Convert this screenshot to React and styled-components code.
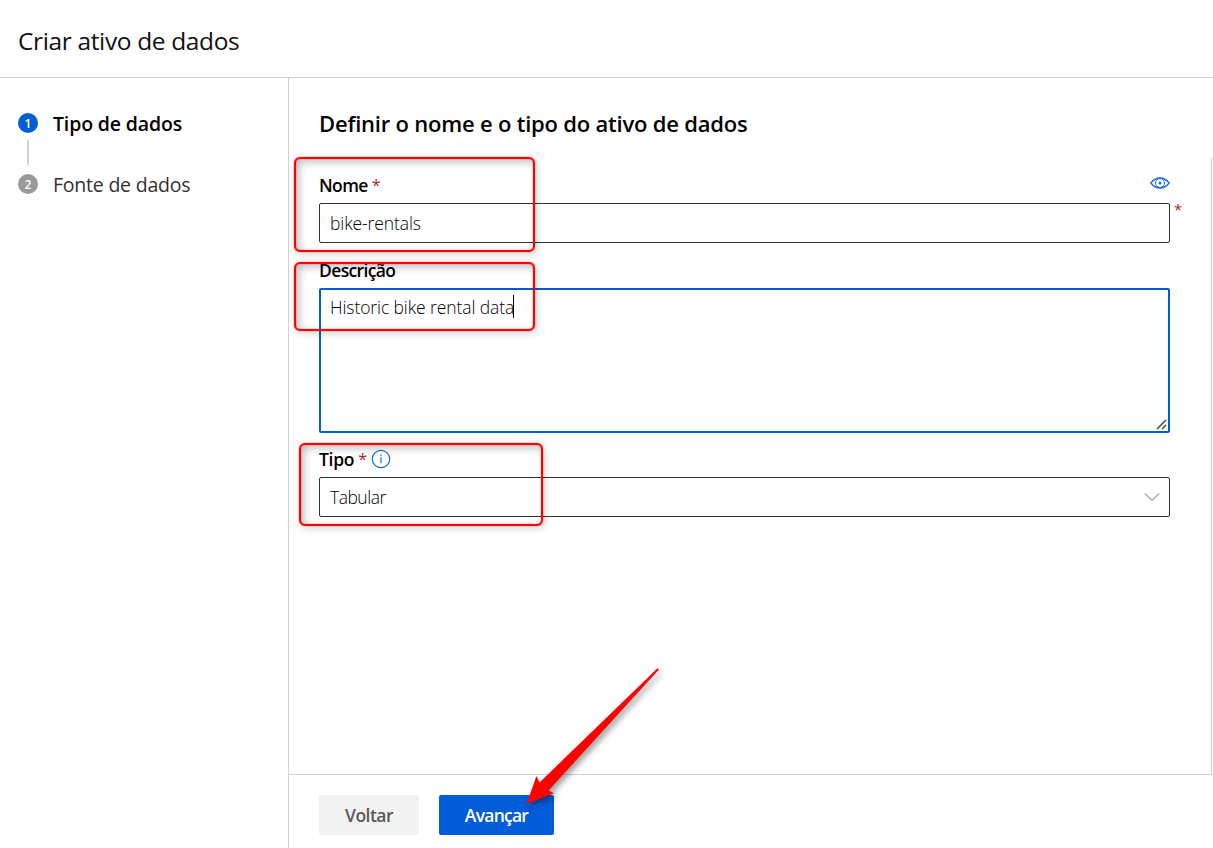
import React from "react";
import styled, { createGlobalStyle } from "styled-components";

const Global = createGlobalStyle`
  *, *::before, *::after { box-sizing: border-box; }
  body {
    margin: 0;
    background: #fff;
    color: #000;
    font-family: "Segoe UI", "Open Sans", "Noto Sans", sans-serif;
    overflow: hidden;
  }
`;

const Page = styled.div`
  position: relative;
  display: flex;
  flex-direction: column;
  width: 1213px;
  height: 848px;
  background: #fff;
`;

const Header = styled.header`
  flex: none;
  height: 78px;
  padding: 22px 18px 0;
  border-bottom: 1px solid #d2d2d2;
`;

const Label = styled.span`
  display: block;
  white-space: nowrap;
  font-size: ${(p) => p.$size}px;
  line-height: ${(p) => p.$line || 24}px;
  font-weight: ${(p) => p.$weight || 400};
  letter-spacing: ${(p) => p.$track || 0}px;
  color: ${(p) => p.$color || "#000"};
`;

const Body = styled.div`
  flex: 1;
  display: flex;
  min-height: 0;
`;

const Sidebar = styled.nav`
  flex: none;
  display: flex;
  flex-direction: column;
  width: 289px;
  padding: 32px 18px 0;
  border-right: 1px solid #d2d2d2;
`;

const Step = styled.div`
  display: flex;
  align-items: center;
  gap: 15px;
  height: 28px;
`;

const StepDot = styled.span`
  flex: none;
  width: 20px;
  height: 20px;
  margin-top: -2px;
  border-radius: 50%;
  background: ${(p) => (p.$active ? "#015cda" : "#999")};
  color: #fff;
  font-size: 12px;
  font-weight: 600;
  line-height: 21px;
  text-align: center;
`;

const StepLine = styled.div`
  width: 2px;
  height: 25px;
  margin: 2px 0 6px 9px;
  background: #d2d2d2;
`;

const Main = styled.main`
  flex: 1;
  display: flex;
  flex-direction: column;
  min-width: 0;
`;

const MainTitle = styled.div`
  flex: none;
  height: 80px;
  padding: 30px 30px 0;
`;

const Form = styled.div`
  flex: 1;
  display: flex;
  flex-direction: column;
  margin-right: 1px;
  padding: 12px 41px 0 30px;
  border-right: 1px solid #d0d0d0;
`;

const FieldHead = styled.div`
  display: flex;
  align-items: center;
  height: 29px;
  margin-bottom: 4px;
`;

const Required = styled.span`
  color: #a4262c;
  font-size: 16px;
  line-height: 24px;
  margin-left: 4px;
`;

const PreviewIcon = styled.svg`
  margin: -4px 0 0 auto;
`;

const InfoIcon = styled.svg`
  margin: 1px 0 0 4px;
`;

const InputRow = styled.div`
  position: relative;
  margin-bottom: 12px;
`;

const SideMark = styled.span`
  position: absolute;
  left: 855px;
  top: -3px;
  color: #a4262c;
  font-size: 14.5px;
  line-height: 20px;
`;

const Input = styled.div`
  display: flex;
  align-items: center;
  justify-content: space-between;
  width: 851px;
  height: 40px;
  padding: 0 9px 0 10px;
  border: 1px solid #323130;
  border-radius: 2px;
`;

const TextArea = styled.div`
  display: flex;
  position: relative;
  width: 851px;
  height: 145px;
  margin-bottom: 11px;
  padding: 5px 9px;
  border: 2px solid #015cda;
  border-radius: 2px;
`;

const Caret = styled.span`
  width: 1px;
  height: 23px;
  margin-left: -1px;
  background: #000;
`;

const Grip = styled.svg`
  position: absolute;
  right: 0;
  bottom: 0;
`;

const Footer = styled.footer`
  flex: none;
  display: flex;
  gap: 20px;
  height: 74px;
  padding: 20px 30px 0;
  border-top: 1px solid #d2d2d2;
`;

const Button = styled.button`
  display: flex;
  align-items: center;
  justify-content: center;
  width: ${(p) => (p.$primary ? 115 : 100)}px;
  height: 40px;
  padding: 0;
  border: 0;
  border-radius: 2px;
  background: ${(p) => (p.$primary ? "#015cda" : "#f3f2f2")};
  font-family: inherit;
`;

const Highlight = styled.div`
  position: absolute;
  left: ${(p) => p.$x}px;
  top: ${(p) => p.$y}px;
  width: ${(p) => p.$w}px;
  height: ${(p) => p.$h}px;
  border: 2px solid #fe0000;
  border-radius: 6px;
  box-shadow: 0 0 1px #fe0000, 2px 2px 8px rgba(0, 0, 0, 0.18),
    inset 0 0 1px #fe0000, inset 3px 3px 9px rgba(0, 0, 0, 0.26);
  pointer-events: none;
`;

const Arrow = styled.svg`
  position: absolute;
  left: 510px;
  top: 650px;
  filter: drop-shadow(3px 3px 3px rgba(0, 0, 0, 0.4));
`;

export default function App() {
  return (
    <Page>
      <Global />
      <Header>
        <Label $size={24.5} $line={38} $track={-0.36} $color="#111">Criar ativo de dados</Label>
      </Header>
      <Body>
        <Sidebar>
          <Step>
            <StepDot $active>1</StepDot>
            <Label $size={19.5} $weight={600} $track={-0.15}>Tipo de dados</Label>
          </Step>
          <StepLine />
          <Step>
            <StepDot>2</StepDot>
            <Label $size={19.5} $track={-0.22} $color="#323130">Fonte de dados</Label>
          </Step>
        </Sidebar>
        <Main>
          <MainTitle>
            <Label $size={22} $line={30} $weight={600} $track={-0.21}>Definir o nome e o tipo do ativo de dados</Label>
          </MainTitle>
          <Form>
            <FieldHead>
              <Label $size={17.5} $weight={600} $track={-0.6}>Nome</Label>
              <Required>*</Required>
              <PreviewIcon width="20" height="12" viewBox="0 0 20 12" fill="none" stroke="#1b6be0">
                <path d="M.8 6C3.4 2.7 6.500 1 10 1s6.600 1.700 9.200 5C16.600 9.300 13.500 11 10 11S3.400 9.300.8 6Z" strokeWidth="1.300" />
                <circle cx="10" cy="6" r="4.500" />
                <circle cx="10" cy="6" r="1.500" fill="#1b6be0" stroke="none" />
              </PreviewIcon>
            </FieldHead>
            <InputRow>
              <Input>
                <Label $size={17.5} $weight={300} $track={-0.1}>bike-rentals</Label>
              </Input>
              <SideMark>*</SideMark>
            </InputRow>
            <FieldHead>
              <Label $size={17.5} $weight={600} $track={-0.64}>Descrição</Label>
            </FieldHead>
            <TextArea>
              <Label $size={17.5} $weight={300} $track={-0.1}>Historic bike rental data</Label>
              <Caret />
              <Grip width="14" height="14" viewBox="0 0 14 14" stroke="#444" strokeWidth="1.500">
                <path d="M3 12l9-9M8 12l4-4" />
              </Grip>
            </TextArea>
            <FieldHead>
              <Label $size={17.5} $weight={600} $track={-0.3}>Tipo</Label>
              <Required>*</Required>
              <InfoIcon width="20" height="20" viewBox="0 0 20 20" fill="none" stroke="#1b6be0">
                <circle cx="10" cy="10" r="8.700" strokeWidth="1.200" />
                <path d="M10 8.200v6M10 5.600v1.300" strokeWidth="1.200" />
              </InfoIcon>
            </FieldHead>
            <Input>
              <Label $size={17.5} $weight={300} $track={-0.5}>Tabular</Label>
              <svg width="16" height="10" viewBox="0 0 16 10" fill="none" stroke="#605e5c">
                <path d="M1 1.500l7 7 7-7" />
              </svg>
            </Input>
          </Form>
          <Footer>
            <Button>
              <Label $size={17.5} $weight={600} $track={-0.55} $color="#5a5856">Voltar</Label>
            </Button>
            <Button $primary>
              <Label $size={17.5} $weight={600} $track={-0.75} $color="#fff">Avançar</Label>
            </Button>
          </Footer>
        </Main>
      </Body>
      <Highlight $x={294} $y={157} $w={241} $h={95} />
      <Highlight $x={294} $y={262} $w={241} $h={69} />
      <Highlight $x={299} $y={443} $w={244} $h={83} />
      <Arrow width="160" height="170" viewBox="510 650 160 170" fill="#fe0000">
        <path d="M526.500 804L536.500 776L539.500 782.500L657.500 668.300L659 669.500L548.500 790.500L554 793.300Z" />
      </Arrow>
    </Page>
  );
}
